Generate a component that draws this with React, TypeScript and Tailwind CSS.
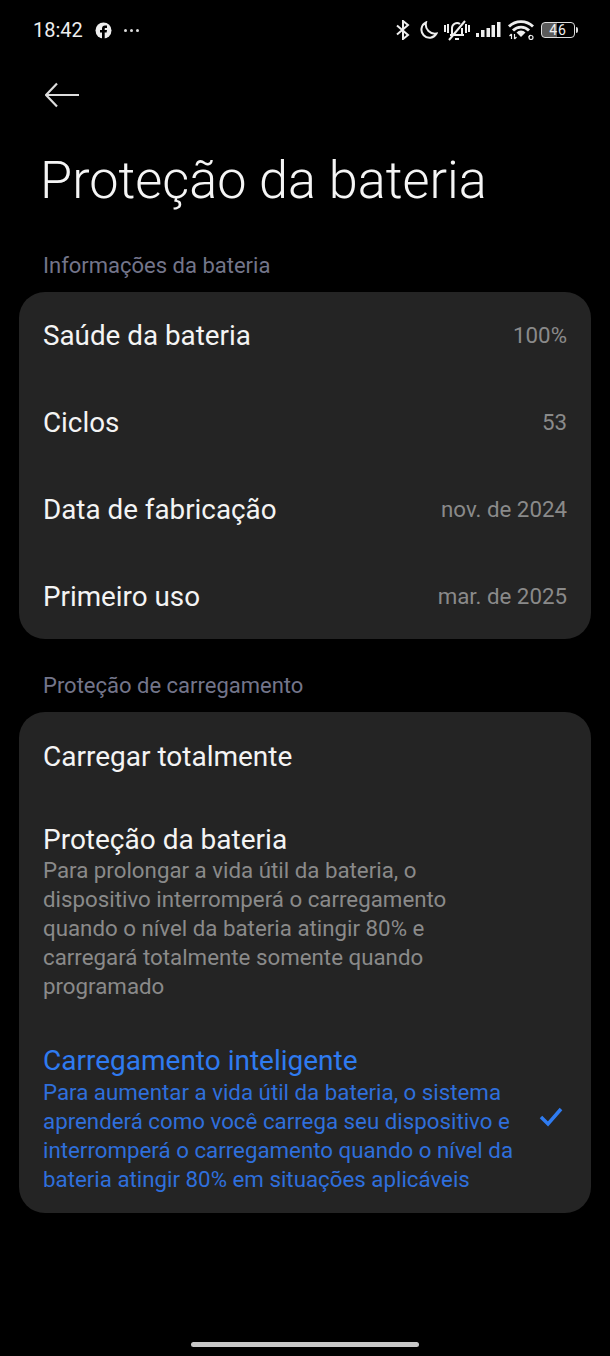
import React from "react";

const font = { fontFamily: 'Roboto, "Noto Sans", sans-serif' };

function Info({ label, value }: { label: string; value: string }) {
  return (
    <div className="flex h-[86.75px] items-center justify-between px-6 pt-[2px]">
      <span className="text-[27.800px] leading-[34px] text-[#f4f4f4]">{label}</span>
      <span className="mb-[2px] text-[22.300px] leading-[28px] text-[#8a8a8a]">{value}</span>
    </div>
  );
}

export default function App() {
  return (
    <div className="flex h-[1356px] w-[610px] flex-col overflow-hidden bg-black" style={font}>
      <div className="flex h-[60px] items-center justify-between pl-[33px] pr-[32px]">
        <div className="flex items-center gap-[12px]">
          <span className="text-[20px] leading-none text-[#eee]">18:42</span>
          <svg width="17" height="17" viewBox="0 0 17 17"><circle cx="8.500" cy="8.500" r="8" fill="#eee" /><path d="M7 17V10.500H5V8h2V6.500C7 4.500 8.200 3.500 10 3.500h2V6h-1.300c-.8 0-1 .4-1 1V8h2.300l-.4 2.500H9.700V17z" fill="#000" /></svg>
          <div className="flex gap-[3px]">
            <div className="h-[3px] w-[3px] rounded-full bg-[#ddd]" />
            <div className="h-[3px] w-[3px] rounded-full bg-[#ddd]" />
            <div className="h-[3px] w-[3px] rounded-full bg-[#ddd]" />
          </div>
        </div>
        <div className="flex items-center">
          <svg width="14" height="20" viewBox="0 0 14 20" fill="none" stroke="#eee" strokeWidth="2"><path d="M1 5.500l11 9.500-5 4V1l5 4L1 14.500" /></svg>
          <svg className="ml-[8px]" width="20" height="18" viewBox="0 0 20 18" fill="none" stroke="#eee" strokeWidth="2"><path d="M8 1.500a8 8 0 1 0 10.500 11c-6 1-12-4-10.500-11z" /></svg>
          <svg className="ml-[6px]" width="26" height="22" viewBox="0 0 26 22" fill="none" stroke="#eee" strokeWidth="2"><path d="M8 15V9a5 5 0 0 1 8-4M18 9v6M6 16h14M11 20h4M5 21L21 2M1 6v7M4 5v9M22 5v9M25 6v7" /></svg>
          <svg className="ml-[6px]" width="25" height="16" viewBox="0 0 25 16" fill="#eee"><rect x="0" y="11" width="3" height="4" /><rect x="5" y="8" width="3.500" height="7" /><rect x="10.500" y="6" width="3.500" height="9" /><rect x="15.500" y="3" width="3.500" height="12" /><rect x="21" y="0" width="3.500" height="15" /></svg>
          <svg className="ml-[7px]" width="26" height="20" viewBox="0 0 26 20" fill="none" stroke="#eee" strokeWidth="2.800"><path d="M1 6.500a17 17 0 0 1 24 0M5 10.500a11 11 0 0 1 16 0" /><path d="M13 17l-4.500-4.500a6 6 0 0 1 9 0z" fill="#eee" stroke="none" /><path d="M3.500 14v5M1.500 16l2-2M6.500 19v-5M8.500 17l-2 2" strokeWidth="1.200" /><circle cx="23" cy="17.500" r="2" fill="none" strokeWidth="1.200" /><path d="M23 15.500c-1.500-.3-2 .7-2 2" strokeWidth="1.200" /></svg>
          <div className="ml-[7px] flex items-center gap-[1px]">
            <div className="flex h-[16px] w-[34px] items-center justify-center rounded-[4px] border border-[#ddd] bg-[linear-gradient(90deg,#5a5a5a_46%,transparent_46%)] text-[14px] leading-none tracking-[1px] text-[#eee]">46</div>
            <div className="h-[6px] w-[2px] rounded-r-sm bg-[#ddd]" />
          </div>
        </div>
      </div>
      <div className="pl-[45px] pt-[22px]">
        <svg width="34" height="26" viewBox="0 0 34 26" fill="none" stroke="#ddd" strokeWidth="2.200" className="block"><path d="M34 13H1M12 1.500L1 13l11 11.500" /></svg>
      </div>
      <h1 className="mt-[43px] pl-[40px] text-[52.200px] font-light leading-[60px] text-[#f5f5f5]">Proteção da bateria</h1>
      <div className="mt-[41px] pl-[43px] text-[22px] leading-[28px] text-[#73758a]">Informações da bateria</div>
      <div className="mx-[19px] mt-[12px] rounded-[26px] bg-[#242424]">
        <Info label="Saúde da bateria" value="100%" />
        <Info label="Ciclos" value="53" />
        <Info label="Data de fabricação" value="nov. de 2024" />
        <Info label="Primeiro uso" value="mar. de 2025" />
      </div>
      <div className="mt-[33px] pl-[43px] text-[22px] leading-[28px] text-[#73758a]">Proteção de carregamento</div>
      <div className="mx-[19px] mt-[12px] rounded-[26px] bg-[#242424] px-6">
        <div className="flex h-[87px] items-center pt-[2px] text-[28px] leading-[34px] text-[#f4f4f4]">Carregar totalmente</div>
        <div className="pt-[24px]">
          <div className="text-[28px] leading-[34px] text-[#f4f4f4]">Proteção da bateria</div>
          <div className="mt-[-1px] text-[22.300px] leading-[29px] text-[#8a8a8a]">
            Para prolongar a vida útil da bateria, o<br />
            dispositivo interromperá o carregamento<br />
            quando o nível da bateria atingir 80% e<br />
            carregará totalmente somente quando<br />
            programado
          </div>
        </div>
        <div className="mt-[43px] flex items-center justify-between pb-[19px]">
          <div>
            <div className="text-[28px] leading-[34px] text-[#2f7bf0]">Carregamento inteligente</div>
            <div className="text-[22.300px] leading-[29px] text-[#2f6fdc]">
              Para aumentar a vida útil da bateria, o sistema<br />
              aprenderá como você carrega seu dispositivo e<br />
              interromperá o carregamento quando o nível da<br />
              bateria atingir 80% em situações aplicáveis
            </div>
          </div>
          <svg width="24" height="20" viewBox="0 0 24 20" fill="none" stroke="#2f7bf0" strokeWidth="3.500" className="mb-[4px] mr-[4px]"><path d="M2 10l7 7L22 2" /></svg>
        </div>
      </div>
      <div className="mt-auto mb-[9px] h-[5px] w-[228px] self-center rounded-full bg-[#c8c8c8]" />
    </div>
  );
}
